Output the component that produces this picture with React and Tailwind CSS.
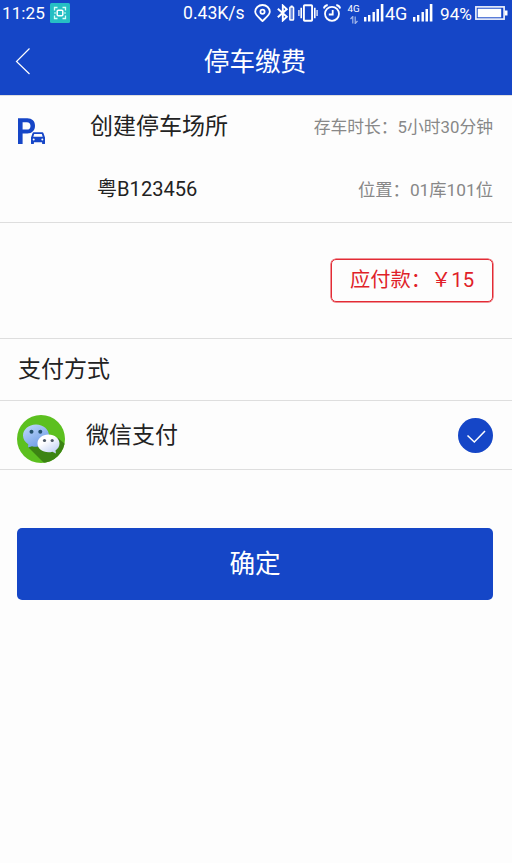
const SignalBars = () => (
  <svg viewBox="0 0 20 18" className="w-5 h-[18px] shrink-0" fill="white">
    <rect x="0" y="13" width="2.4" height="4.500" />
    <rect x="4" y="11" width="2.4" height="6.500" />
    <rect x="8.5" y="8" width="2.4" height="9.500" />
    <rect x="12.5" y="5" width="2.5" height="12.500" />
    <rect x="16.800" y="0" width="2.6" height="17.500" />
  </svg>
);

const StatusBar = () => (
  <div className="flex h-[27px] items-center text-[17.2px] leading-none pl-0.5 whitespace-nowrap">
    <span className="w-[48px] pt-px">11:25</span>
    <svg viewBox="0 0 20 20" className="w-5 h-5 shrink-0 -mt-px" fill="none">
      <rect width="20" height="20" rx="1.5" fill="#26bfc4" />
      <path d="M4.5 7.5v-3h3M12.500 4.500h3v3M15.500 12.500v3h-3M7.500 15.500h-3v-3" stroke="#d8fff9" strokeWidth="1.3" />
      <rect x="7.200" y="7.200" width="5.600" height="5.600" rx="1" stroke="white" strokeWidth="1.5" />
      <path d="M4 10h2M14 10h2" stroke="#d8fff9" />
    </svg>
    <span className="ml-[113px] w-[71px] pt-px text-[17.6px]">0.43K/s</span>

    {/* location */}
    <svg viewBox="0 0 17 18" className="w-[17px] h-[18px] shrink-0 -mt-px" fill="none" stroke="white" strokeWidth="1.8">
      <path d="M8.500 17C5.500 14 1.200 11 1.200 7.800a7.300 6.800 0 0 1 14.600 0c0 3.200-4.300 6.200-7.300 9.200z" />
      <circle cx="8.500" cy="7.800" r="2.100" />
    </svg>

    {/* bluetooth with device battery */}
    <svg viewBox="0 0 18 18" className="w-[18px] h-[18px] shrink-0 ml-[6px] -mt-px" fill="none" stroke="white" strokeWidth="1.9">
      <path d="M.8 4.800l9 8-4 3.700V1.500l4 3.700-9 8" />
      <rect x="12.800" y="3" width="3.800" height="13" rx=".8" strokeWidth="1.400" fill="white" fillOpacity=".35" />
      <path d="M14.700 1.500v1.500" strokeWidth="2" />
    </svg>

    {/* vibrate */}
    <svg viewBox="0 0 20 18" className="w-5 h-[18px] shrink-0 ml-[3px] -mt-px" fill="none" stroke="white" strokeWidth="1.9">
      <rect x="5.900" y="1.300" width="8.200" height="15.400" rx=".8" />
      <path d="M3.200 3.800v10.400M16.800 3.800v10.400" strokeWidth="1.600" />
      <path d="M.9 6v6M19.100 6v6" strokeWidth="1.500" opacity=".8" />
    </svg>

    {/* alarm */}
    <svg viewBox="0 0 18 18" className="w-[18px] h-[18px] shrink-0 ml-[5px] -mt-px" fill="none" stroke="white" strokeWidth="1.8">
      <circle cx="9" cy="9.800" r="7" />
      <path d="M9.700 6v4.500H5.800" />
      <path d="M.8 4.400C1.300 2.700 2.700 1.300 4.700 1M17.200 4.400c-.5-1.700-1.900-3.100-3.900-3.400" />
    </svg>

    <span className="ml-[6px] flex w-[13px] flex-col items-center">
      <span className="text-[9.800px] leading-[10px]">4G</span>
      <svg viewBox="0 0 8 8" className="mt-0.5 w-2 h-2 opacity-60" fill="none" stroke="white" strokeWidth="1.200">
        <path d="M.5 3L2.800 .5V7.500M5.200 .5v7L7.500 5" />
      </svg>
    </span>
    <span className="ml-[4px] flex -mt-px"><SignalBars /></span>
    <span className="w-[28px] pl-px text-[18px]">4G</span>
    <span className="ml-px flex -mt-px"><SignalBars /></span>
    <span className="ml-[7px] w-[35px] pt-0.5 text-[17.2px]">94%</span>
    <svg viewBox="0 0 33 14" className="w-[33px] h-[14px] shrink-0 -mt-px" fill="none">
      <rect x=".9" y=".9" width="28.200" height="12.200" stroke="white" strokeOpacity=".9" strokeWidth="1.700" />
      <rect x="2.700" y="2.700" width="23.500" height="8.600" fill="white" />
      <path d="M30 4.500h2.500v5H30z" fill="white" />
    </svg>
  </div>
);

const ParkingIcon = () => (
  <svg viewBox="0 0 28 28" className="w-7 h-7" fill="#1646c7">
    <path fillRule="evenodd" d="M1 .3h9.300c4.700 0 7.700 2.800 7.700 7.500s-3 7.700-7.700 7.700H5.600V26H1zM5.600 4.200v7.400h4.300c2.300 0 3.600-1.400 3.600-3.700s-1.300-3.700-3.600-3.700z" />
    <path fillRule="evenodd" d="M16.700 14.300h8.600c.6 0 1 .3 1.200.9l1.500 4.300v5.900c0 .4-.3.700-.7.700h-1.500c-.4 0-.7-.3-.7-.7v-1.200h-8.200v1.200c0 .4-.3.700-.7.700h-1.500c-.4 0-.7-.3-.7-.7v-5.900l1.500-4.300c.2-.6.600-.9 1.200-.9zm.5 1.700l-.9 2.700h9.400l-.9-2.700zM16.700 20.600a1 1 0 1 0 0 2 1 1 0 0 0 0-2zm8.600 0a1 1 0 1 0 0 2 1 1 0 0 0 0-2z" />
  </svg>
);

const WechatIcon = () => (
  <svg viewBox="0 0 48 48" className="w-12 h-12">
    <defs>
      <clipPath id="disc"><circle cx="24" cy="24" r="24" /></clipPath>
      <linearGradient id="blue" x1="0" y1="0" x2="0.6" y2="1">
        <stop offset="0" stopColor="#c4dcfb" />
        <stop offset="1" stopColor="#6f9de6" />
      </linearGradient>
      <linearGradient id="pale" x1="0" y1="0" x2="0.7" y2="1">
        <stop offset="0.4" stopColor="#ffffff" />
        <stop offset="1" stopColor="#c3d3f5" />
      </linearGradient>
    </defs>
    <g clipPath="url(#disc)">
      <rect width="48" height="48" fill="#5cc01f" />
      <path d="M11 32L28 49H48V29L41 23z" fill="#3c8413" />
      <path d="M19 9.500c7.500 0 13 5 13 11s-5.500 11.300-13 11.300c-1.500 0-2.700-.2-4-.6L11 32.500l.3-3.200C8 27.200 6 24 6 20.500c0-6 5.500-11 13-11z" fill="url(#blue)" />
      <path d="M31.500 19.500c6.300 0 11 4 11 9 0 3-1.500 5.300-4 7l.5 3-3.600-1.800c-1.200.4-2.500.5-3.900.5-6.300 0-11-3.800-11-8.700s4.700-9 11-9z" fill="url(#pale)" />
      <circle cx="14.500" cy="16.700" r="2" fill="#24516e" />
      <circle cx="23.300" cy="16.700" r="2" fill="#24516e" />
      <circle cx="27.500" cy="25.500" r="1.600" fill="#4d5866" />
      <circle cx="35.200" cy="25.500" r="1.600" fill="#4d5866" />
    </g>
  </svg>
);

const App = () => {
  return (
    <div className="h-[863px] w-[512px] overflow-hidden bg-[#fdfdfd] text-[#222] font-[Roboto,'Noto_Sans_CJK_SC',sans-serif]">
      <header className="h-[95px] bg-[#1546c7] text-white">
        <StatusBar />
        <div className="flex h-[68px] items-center">
          <svg viewBox="0 0 16 28" className="ml-[15px] w-4 h-7 shrink-0" fill="none" stroke="white" strokeWidth="1.200">
            <path d="M14.500 1.500L1.500 14.500l13 12.500" />
          </svg>
          <h1 className="flex-1 pr-[33px] pt-0.5 text-center text-[25.600px] leading-[68px]">停车缴费</h1>
        </div>
      </header>

      {/* parking record */}
      <section className="flex h-[128px] border-y border-[#dedede] pr-[19px]">
        <div className="w-[90px] shrink-0 pl-[17px] pt-[22px]">
          <ParkingIcon />
        </div>
        <div className="flex-1">
          <div className="flex h-[61px] items-center justify-between pt-0.5">
            <span className="text-[23px]">创建停车场所</span>
            <span className="text-[16.800px] text-[#888]">存车时长：5小时30分钟</span>
          </div>
          <div className="flex h-[65px] items-center justify-between">
            <span className="pl-[7px] text-[20.100px]">粤B123456</span>
            <span className="pt-0.5 text-[17.300px] text-[#888]">位置：01库101位</span>
          </div>
        </div>
      </section>

      <section className="flex h-[116px] items-center justify-end border-b border-[#dedede] pb-px pr-[19px]">
        <div className="flex h-[43px] w-[162px] items-center justify-center rounded-[5px] border border-[#e32b35] pt-px text-[20.300px] text-[#e01f29] shadow-[0_0_0_0.5px_#e32b35]">
          应付款：￥15
        </div>
      </section>

      <h2 className="flex h-[62px] items-center border-b border-[#dedede] pl-[18px] pt-0.5 text-[23px]">支付方式</h2>

      <div className="flex h-[69px] items-center border-b border-[#dedede] pl-[17px] pr-[19px]">
        <span className="pt-[7px]"><WechatIcon /></span>
        <span className="flex-1 pl-[21px] pt-0.5 text-[23px]">微信支付</span>
        <svg viewBox="0 0 35 35" className="w-[35px] h-[35px]" fill="none">
          <circle cx="17.500" cy="17.500" r="17.500" fill="#1546c7" />
          <path d="M9.500 17.500l6.800 6.500L27 13" stroke="white" strokeWidth="1.500" />
        </svg>
      </div>

      <div className="pl-[17px] pr-[19px] pt-[58px]">
        <button className="h-[72px] w-full rounded-[5px] bg-[#1546c7] text-[25.600px] text-white">确定</button>
      </div>
    </div>
  );
};

export default App;
